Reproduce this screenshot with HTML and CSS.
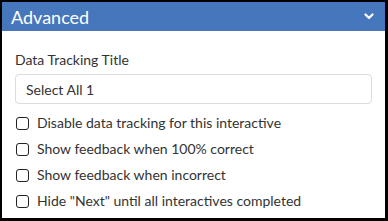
FILE: index.html
```html
<!DOCTYPE html>
<html>
<head>
  <meta charset="UTF-8">
  <title>Advanced</title>
  <link rel="stylesheet" href="styles.css">
</head>
<body>
  <div class="panel">
    <div class="panel-head">
      <span>Advanced</span>
      <svg class="chevron" width="10" height="7" viewBox="0 0 10 7">
        <path d="M1.5 1.5 L5 5 L8.5 1.5" fill="none" stroke="#fff" stroke-width="2.2" stroke-linecap="round" stroke-linejoin="round"/>
      </svg>
    </div>
    <div class="panel-body">
      <label class="field-label" for="trackTitle">Data Tracking Title</label>
      <input id="trackTitle" class="text-input" type="text" value="Select All 1">
      <div class="options">
        <label class="option"><span class="box"></span>Disable data tracking for this interactive</label>
        <label class="option"><span class="box"></span>Show feedback when 100% correct</label>
        <label class="option"><span class="box"></span>Show feedback when incorrect</label>
        <label class="option"><span class="box"></span>Hide "Next" until all interactives completed</label>
      </div>
    </div>
  </div>
</body>
</html>
```

FILE: styles.css
```css
:root {
  --header: #4677bd;
  --text: #333333;
  --border: #dcdcdc;
}

html, body {
  margin: 0;
  height: 100%;
}

body {
  font-family: Lato, 'Open Sans', sans-serif;
  color: var(--text);
  background: #000;
  padding: 2px 3px 3px 2px;
  box-sizing: border-box;
}

.panel {
  background: white;
  height: 100%;
}

.panel-head {
  display: flex;
  align-items: center;
  justify-content: space-between;
  height: 29px;
  padding: 0 11px 0 9px;
  background: var(--header);
  color: white;
  font-size: 18px;
}

.panel-body {
  padding: 20px 13px 0 13px;
}

.field-label {
  display: block;
  font-size: 14px;
  line-height: 18px;
  margin-bottom: 5px;
}

.text-input {
  display: block;
  width: 100%;
  box-sizing: border-box;
  height: 30px;
  padding: 0 10px;
  border: 1px solid var(--border);
  border-radius: 4px;
  font-family: inherit;
  font-size: 14px;
  color: var(--text);
}

.options {
  display: flex;
  flex-direction: column;
  gap: 8px;
  margin-top: 10px;
}

.option {
  display: flex;
  align-items: center;
  gap: 8px;
  padding-left: 1px;
  font-size: 14px;
  line-height: 18px;
}

.box {
  width: 11px;
  height: 11px;
  border: 1px solid #222;
  border-radius: 3px;
  flex: none;
}
```
